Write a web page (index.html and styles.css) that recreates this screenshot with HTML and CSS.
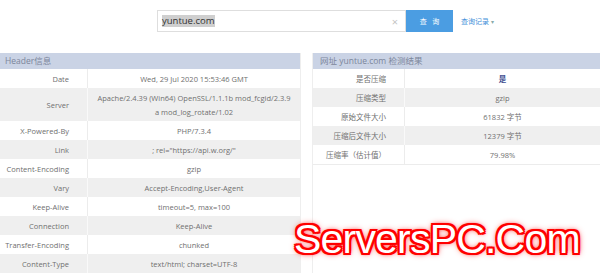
FILE: index.html
```html
<!DOCTYPE html>
<html lang="zh-CN">
<head>
    <meta charset="UTF-8">
    <meta name="viewport" content="width=device-width, initial-scale=1.0">
    <title>网页GZIP压缩检测</title>
    <link rel="stylesheet" href="styles.css">
</head>
<body>
    <div class="search">
        <div class="search-box">
            <span class="search-text">yuntue.com</span>
            <span class="search-clear">&times;</span>
        </div>
        <button class="search-btn">查 询</button>
        <a class="history" href="#">查询记录 <span class="caret">&#9662;</span></a>
    </div>

    <div class="panels">
        <div class="panel panel-left">
            <div class="panel-title">Header信息</div>
            <table class="info">
                <tr><td class="key">Date</td><td>Wed, 29 Jul 2020 15:53:46 GMT</td></tr>
                <tr><td class="key">Server</td><td>Apache/2.4.39 (Win64) OpenSSL/1.1.1b mod_fcgid/2.3.9<br>a mod_log_rotate/1.02</td></tr>
                <tr><td class="key">X-Powered-By</td><td>PHP/7.3.4</td></tr>
                <tr><td class="key">Link</td><td>; rel="https://api.w.org/"</td></tr>
                <tr><td class="key">Content-Encoding</td><td>gzip</td></tr>
                <tr><td class="key">Vary</td><td>Accept-Encoding,User-Agent</td></tr>
                <tr><td class="key">Keep-Alive</td><td>timeout=5, max=100</td></tr>
                <tr><td class="key">Connection</td><td>Keep-Alive</td></tr>
                <tr><td class="key">Transfer-Encoding</td><td>chunked</td></tr>
                <tr><td class="key">Content-Type</td><td>text/html; charset=UTF-8</td></tr>
            </table>
        </div>

        <div class="panel panel-right">
            <div class="panel-title">网址 yuntue.com 检测结果</div>
            <table class="info result">
                <tr><td class="key">是否压缩</td><td class="yes">是</td></tr>
                <tr><td class="key">压缩类型</td><td>gzip</td></tr>
                <tr><td class="key">原始文件大小</td><td>61832 字节</td></tr>
                <tr><td class="key">压缩后文件大小</td><td>12379 字节</td></tr>
                <tr><td class="key">压缩率（估计值）</td><td>79.98%</td></tr>
            </table>
        </div>
    </div>

    <div class="watermark">ServersPC.Com</div>
</body>
</html>
```

FILE: styles.css
```css
body {
    margin: 0;
    background: #fff;
    font-family: "Open Sans", "Noto Sans CJK SC", sans-serif;
    color: #6f6f6f;
}

.search {
    display: flex;
    align-items: center;
    padding: 10px 0 0 157px;
    height: 22px;
}

.search-box {
    width: 236px;
    height: 20px;
    border: 1px solid #dedede;
    display: flex;
    align-items: center;
    justify-content: space-between;
    padding: 0 7px 0 4px;
    box-sizing: content-box;
}

.search-text {
    font-size: 9.5px;
    color: #333;
    background: #cfcfcf;
    line-height: 12px;
}

.search-clear {
    font-size: 11px;
    color: #c4c4c4;
}

.search-btn {
    width: 47px;
    height: 22px;
    border: none;
    background: #4b9de2;
    color: #fff;
    font-family: "Noto Sans CJK SC", sans-serif;
    font-size: 7px;
    letter-spacing: 2px;
    padding: 0 0 0 2px;
}

.history {
    margin-left: 8px;
    font-family: "Noto Sans CJK SC", sans-serif;
    font-size: 7px;
    color: #3f8fd9;
    text-decoration: none;
}

.caret {
    font-size: 6px;
    color: #8aa;
}

.panels {
    display: flex;
    gap: 11px;
    margin-top: 21px;
}

.panel-left {
    width: 300px;
    border-right: 1px solid #eee;
}

.panel-right {
    flex: 1;
    border-left: 1px solid #eee;
}

.panel-title {
    background: #cad3e5;
    color: #7c869b;
    font-size: 8.5px;
    height: 16px;
    line-height: 16px;
    padding-left: 5px;
}

.panel-right .panel-title {
    padding-left: 7px;
}

.info {
    width: 100%;
    border-collapse: collapse;
    font-size: 7.5px;
}

.info td {
    text-align: center;
    line-height: 14px;
    padding: 2.5px 0;
    border-left: 1px solid #ececec;
}

.info td.key {
    text-align: right;
    width: 69px;
    padding-right: 18px;
    border-left: none;
}

.info tr:nth-child(even) {
    background: #efefef;
}

.info tr:nth-child(even) td {
    border-left-color: #f9f9f9;
}

.result {
    border-bottom: 1px solid #ececec;
}

.result td.key {
    width: 73px;
    padding-right: 18px;
}

.result td.yes {
    color: #3d4d8f;
    font-weight: bold;
}

.watermark {
    position: absolute;
    left: 294px;
    top: 219px;
    font-family: "Liberation Sans", Arial, sans-serif;
    font-size: 41px;
    line-height: 41px;
    letter-spacing: -0.8px;
    color: #fff;
    text-shadow:
        2px 0 0 #f00, -2px 0 0 #f00, 0 2px 0 #f00, 0 -2px 0 #f00,
        2px 2px 0 #f00, -2px -2px 0 #f00, 2px -2px 0 #f00, -2px 2px 0 #f00,
        0 0 4px #e00, 0 0 7px #f22;
}
```
